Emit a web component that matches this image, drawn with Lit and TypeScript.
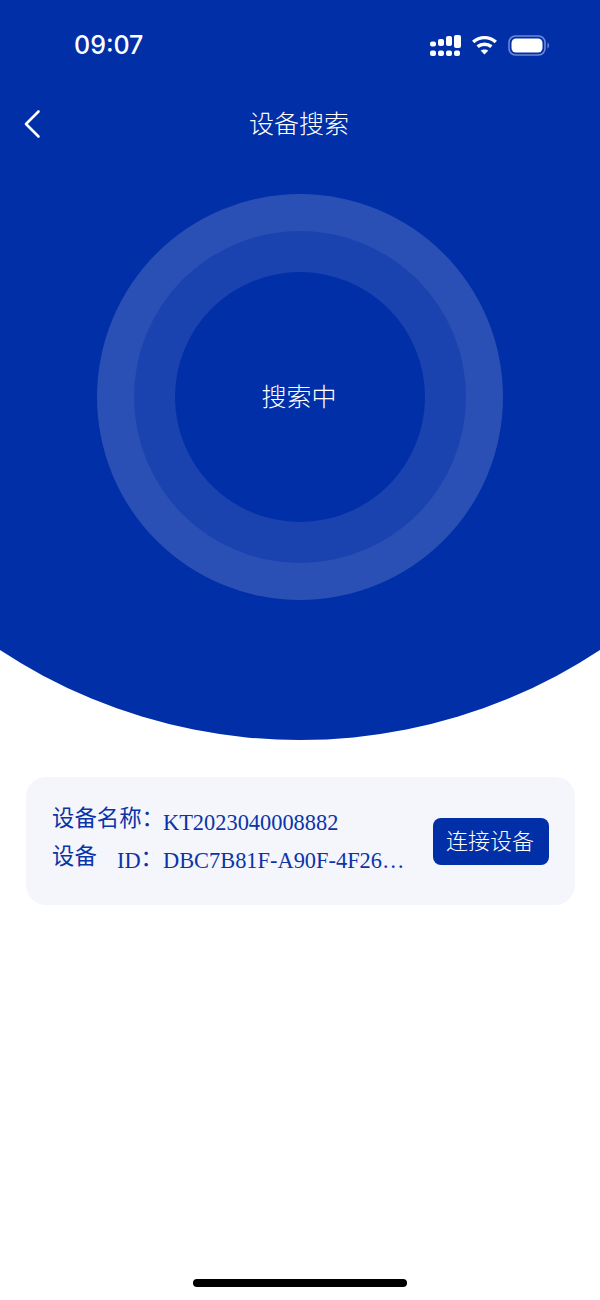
import { LitElement, html, css, svg } from "lit";
import { customElement } from "lit/decorators.js";

@customElement("app-root")
export class AppRoot extends LitElement {
  static styles = css`
    :host {
      display: block;
      width: 600px;
      height: 1300px;
      background: #fff;
      overflow: hidden;
      position: relative;
      font-family: "Noto Sans CJK SC", sans-serif;
    }
    .hero {
      position: relative;
      height: 740px;
      overflow: hidden;
      color: #fff;
    }
    .hero-bg {
      position: absolute;
      left: -245px;
      bottom: 0;
      width: 1090px;
      height: 1090px;
      border-radius: 50%;
      background: #002fa8;
    }
    .hero-content {
      position: relative;
      display: flex;
      flex-direction: column;
      align-items: stretch;
    }
    .status {
      height: 90px;
      display: flex;
      align-items: center;
      justify-content: space-between;
      padding: 0 50px 0 74px;
      box-sizing: border-box;
    }
    .time {
      font-family: Inter, sans-serif;
      font-size: 25px;
      font-weight: 500;
      line-height: 30px;
    }
    .status-icons {
      display: flex;
      align-items: center;
      gap: 11px;
    }
    .status-icons svg { display: block; }
    .nav {
      height: 68px;
      display: grid;
      grid-template-columns: 100px 1fr 100px;
      align-items: center;
    }
    .back { display: block; margin-left: 22px; }
    .title {
      text-align: center;
      font-size: 25px;
      line-height: 34px;
      font-weight: 300;
      margin: -4px 0 0 -2px;
    }
    .radar {
      margin: 36px auto 0;
      width: 406px;
      height: 406px;
      border-radius: 50%;
      background: #2a50b5;
      display: flex;
      align-items: center;
      justify-content: center;
    }
    .ring {
      width: 332px;
      height: 332px;
      border-radius: 50%;
      background: #1a43af;
      display: flex;
      align-items: center;
      justify-content: center;
    }
    .core {
      width: 250px;
      height: 250px;
      border-radius: 50%;
      background: #002fa8;
      display: flex;
      align-items: center;
      justify-content: center;
      font-size: 25px;
      font-weight: 300;
      padding-bottom: 4px;
      padding-right: 2px;
      box-sizing: border-box;
    }
    .card {
      margin: 37px 25px 0 26px;
      height: 128px;
      box-sizing: border-box;
      padding: 0 26px 0 26px;
      border-radius: 20px;
      background: #f4f6fb;
      display: flex;
      align-items: center;
      justify-content: space-between;
    }
    .info {
      display: flex;
      flex-direction: column;
      gap: 3px;
      color: #0a34a8;
      font-family: "Liberation Serif", "Noto Sans CJK SC", serif;
      font-size: 22.4px;
      line-height: 35px;
    }
    .row { display: flex; white-space: nowrap; }
    .label {
      width: 111px;
      flex: none;
      display: flex;
      justify-content: space-between;
    }
    .cn {
      font-family: "Noto Sans CJK SC", sans-serif;
      font-weight: 400;
      vertical-align: 2px;
      line-height: 1;
    }
    .connect {
      width: 116px;
      height: 47px;
      border-radius: 8px;
      background: #002fa8;
      color: #fff;
      display: flex;
      align-items: center;
      justify-content: center;
      font-size: 22px;
      font-weight: 300;
      padding: 0 2px 4px 0;
      box-sizing: border-box;
      margin-right: 0;
    }
    .home {
      position: absolute;
      left: 193px;
      top: 1279px;
      width: 214px;
      height: 8px;
      border-radius: 4px;
      background: #000;
    }
  `;

  private signal() {
    return html`<svg width="31" height="21" viewBox="0 0 31 21" fill="#fff">
      ${[
        [0, 6.5, 6, 5],
        [8, 4, 6, 7],
        [16, 1, 6, 10],
        [24, 0, 7, 13],
      ].map(([x, y, w, h]) => svg`<rect x=${x} y=${y} width=${w} height=${h} rx="2"></rect>`)}
      ${[0, 8, 16, 24].map((x) => svg`<rect x=${x} y="15.5" width="6" height="5.5" rx="2"></rect>`)}
    </svg>`;
  }

  private wifi() {
    return html`<svg width="25" height="20" viewBox="0 0 25 20" fill="none" stroke="#fff" stroke-width="3.4">
      <path d="M1.2 7 C7.5 1.2 17.5 1.2 23.8 7"></path>
      <path d="M5.6 11.6 C9.5 8.4 15.5 8.4 19.4 11.6"></path>
      <path d="M12.5 19.5 L8.6 15.6 C10.6 14 14.4 14 16.4 15.6 Z" fill="#fff" stroke="none"></path>
    </svg>`;
  }

  private battery() {
    return html`<svg width="42" height="21" viewBox="0 0 42 21" fill="none">
      <rect x="1" y="1" width="36" height="19" rx="6.5" stroke="#6f88d2" stroke-width="1.6"></rect>
      <rect x="3.5" y="3.5" width="31" height="14" rx="4.5" fill="#fff"></rect>
      <path d="M39.5 7.5 C41.5 8.2 41.5 12.8 39.5 13.5 Z" fill="#6f88d2"></path>
    </svg>`;
  }

  render() {
    return html`
      <section class="hero">
        <div class="hero-bg"></div>
        <div class="hero-content">
          <div class="status">
            <span class="time">09:07</span>
            <div class="status-icons">${this.signal()}${this.wifi()}${this.battery()}</div>
          </div>
          <div class="nav">
            <svg class="back" width="20" height="30" viewBox="0 0 20 30" fill="none" stroke="#fff" stroke-width="2.6" stroke-linecap="round" stroke-linejoin="round">
              <path d="M16.5 2.5 L4 15 L16.5 27.5"></path>
            </svg>
            <div class="title">设备搜索</div>
            <div></div>
          </div>
          <div class="radar">
            <div class="ring">
              <div class="core">搜索中</div>
            </div>
          </div>
        </div>
      </section>
      <section class="card">
        <div class="info">
          <div class="row">
            <div class="label"><span class="cn">设备名称：</span></div>
            <span>KT2023040008882</span>
          </div>
          <div class="row">
            <div class="label"><span class="cn">设备</span><span>ID<span class="cn">：</span></span></div>
            <span>DBC7B81F-A90F-4F26…</span>
          </div>
        </div>
        <div class="connect">连接设备</div>
      </section>
      <div class="home"></div>
    `;
  }
}
